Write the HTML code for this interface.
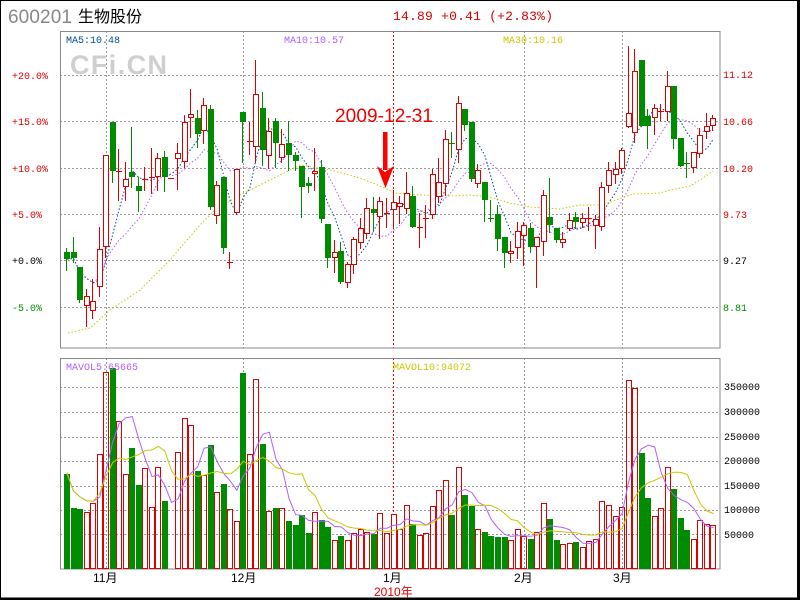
<!DOCTYPE html>
<html><head><meta charset="utf-8">
<style>
html,body{margin:0;padding:0;background:#fff;}
svg{display:block;}
.m{font-family:"Liberation Mono","DejaVu Sans Mono",monospace;}
.s{font-family:"Liberation Sans","Noto Sans CJK SC",sans-serif;}
</style></head>
<body>
<svg id="c" width="800" height="600" xmlns="http://www.w3.org/2000/svg">
<rect x="0" y="0" width="800" height="600" fill="#fff"/>
<rect x="0.5" y="0.5" width="797" height="597.5" fill="none" stroke="#000" stroke-width="1"/>
<line x1="798.5" y1="0" x2="798.5" y2="600" stroke="#000" stroke-width="3"/>
<line x1="0" y1="599" x2="800" y2="599" stroke="#000" stroke-width="2"/>
<text x="8" y="23" class="s" font-size="19" fill="#888" textLength="64">600201</text>
<text x="78" y="22" class="s" font-size="16" fill="#000">生物股份</text>
<text x="393" y="20" class="m" font-size="13" fill="#dd0000" textLength="160">14.89 +0.41 (+2.83%)</text>
<g id="g"></g>
<text x="70" y="74" class="s" font-size="27" font-weight="bold" fill="#cfcfcf" textLength="97">CFi.CN</text>
<text x="66" y="43" class="m" font-size="10" fill="#004c9a">MA5:10.48</text>
<text x="284" y="43" class="m" font-size="10" fill="#b060ff">MA10:10.57</text>
<text x="503" y="43" class="m" font-size="10" fill="#c8c800">MA30:10.16</text>
<text x="66" y="370" class="m" font-size="10" fill="#b060ff">MAVOL5:65665</text>
<text x="393" y="370" class="m" font-size="10" fill="#c8c800">MAVOL10:94072</text>
<text x="335" y="122" class="s" font-size="19" fill="#ee0000" textLength="98">2009-12-31</text>
<rect x="383" y="132" width="4.5" height="38" fill="#ff0000"/>
<polygon points="377,166 385,172 394,166 385.5,188" fill="#ff0000"/>
<g class="m" font-size="10">
<text x="12" y="79" fill="#dd0000">+20.0%</text>
<text x="12" y="125" fill="#dd0000">+15.0%</text>
<text x="12" y="172" fill="#dd0000">+10.0%</text>
<text x="12" y="218" fill="#dd0000">+5.0%</text>
<text x="12" y="264" fill="#000">+0.0%</text>
<text x="12" y="311" fill="#008c00">-5.0%</text>
<text x="723" y="78" fill="#dd0000">11.12</text>
<text x="723" y="125" fill="#dd0000">10.66</text>
<text x="723" y="172" fill="#dd0000">10.20</text>
<text x="723" y="218" fill="#dd0000">9.73</text>
<text x="723" y="264" fill="#000">9.27</text>
<text x="723" y="311" fill="#008c00">8.81</text>
<text x="724" y="390" fill="#000">350000</text>
<text x="724" y="415" fill="#000">300000</text>
<text x="724" y="440" fill="#000">250000</text>
<text x="724" y="464" fill="#000">200000</text>
<text x="724" y="489" fill="#000">150000</text>
<text x="724" y="513" fill="#000">100000</text>
<text x="724" y="538" fill="#000">50000</text>
</g>
<g class="s" font-size="12" fill="#000">
<text x="93" y="582">11月</text>
<text x="231" y="582">12月</text>
<text x="383" y="582">1月</text>
<text x="514" y="582">2月</text>
<text x="613" y="582">3月</text>
<text x="374" y="596" fill="#dd0000">2010年</text>
</g>
</svg>
<script>
var C=[
['g',252,259,248,270],['g',252,258,237,262],['g',267,300,267,302],['r',296,305,289,326],['r',301,310,279,318],
['r',249,286,227,296],['r',155,246,155,257],['g',122,171,122,182],['x',171,171,149,200],['r',179,186,162,200],
['g',172,177,127,187],['g',186,191,177,211],['x',179,179,167,190],['x',177,177,148,193],['r',158,176,153,190],
['g',157,177,151,191],['x',178,178,178,178],['r',153,158,143,189],['r',122,161,115,167],['r',114,117,89,137],
['g',118,134,110,147],['r',105,130,98,143],['g',109,207,105,209],['r',185,215,181,223],['g',177,248,177,253],
['x',262,262,252,268],['r',169,212,169,214],['g',112,122,112,162],['x',141,141,122,154],['r',94,146,60,162],
['g',108,150,92,165],['r',131,155,118,168],['g',121,143,118,167],['r',144,157,129,162],['g',143,155,121,170],
['g',155,161,152,170],['g',166,187,166,217],['g',183,186,177,192],['r',171,173,148,190],['g',167,219,160,222],
['g',224,258,224,267],['r',252,257,240,272],['g',251,282,242,283],['r',264,282,262,287],['r',239,264,237,273],
['r',228,242,218,248],['r',208,233,198,238],['g',209,213,197,230],['r',201,216,197,238],['x',213,213,198,227],
['r',202,209,190,226],['r',203,206,196,223],['r',193,208,172,213],['g',196,227,186,227],['x',227,227,213,247],
['x',218,218,205,237],['r',174,214,169,218],['r',182,196,158,202],['r',139,183,130,195],['g',143,144,132,157],
['r',103,149,96,162],['g',109,125,109,130],['g',122,179,122,181],['r',170,183,164,187],['g',182,200,182,221],
['g',218,219,200,221],['g',214,239,205,250],['g',237,253,237,267],['r',251,253,241,262],['r',231,247,222,258],
['r',225,235,222,265],['g',228,247,223,252],['r',237,246,237,287],['r',195,241,190,255],['g',217,225,178,232],
['g',228,240,228,242],['r',239,242,232,247],['r',220,228,213,230],['g',217,222,212,228],['r',218,222,213,227],
['x',218,218,207,230],['r',219,225,215,248],['r',187,226,182,230],['r',170,185,162,192],['r',169,174,162,183],
['r',150,168,148,173],['r',113,126,46,127],['r',71,132,49,142],['g',60,126,60,126],['g',116,126,109,148],
['r',108,117,104,134],['x',111,111,104,120],['r',86,111,71,120],['g',86,139,86,148],['g',138,166,138,166],
['g',163,164,152,177],['r',152,167,152,172],['r',135,153,128,157],['r',126,131,113,138],['r',118,125,115,130]];
var V=[474,508,509,512,503,454,372,368,421,474,448,485,468,507,467,501,569,452,418,425,471,475,445,492,484,509,521,373,454,379,444,511,508,508,521,525,515,533,512,520,527,540,536,540,533,529,532,534,513,533,514,529,505,524,535,533,506,490,480,515,467,495,506,529,532,536,537,537,540,529,536,539,532,503,519,540,544,543,542,547,541,539,501,505,516,507,380,388,453,498,516,508,467,489,518,530,539,520,524,525];
var R='#dd0000',G='#008c00',s='';
function ln(a,b,c,d,col,da,w){return '<line x1="'+a+'" y1="'+b+'" x2="'+c+'" y2="'+d+'" stroke="'+col+'"'+(da?' stroke-dasharray="'+da+'"':'')+' stroke-width="'+(w||1)+'"/>';}
[75,121,168,214,260,307].forEach(function(y){s+=ln(60,y+.5,720,y+.5,'#999','2,2');});
[387,412,437,461,486,510,534].forEach(function(y){s+=ln(60,y+.5,720,y+.5,'#999','2,2');});
[106,243,524,622].forEach(function(x){s+=ln(x+.5,31,x+.5,348,'#999','2,2');s+=ln(x+.5,358,x+.5,569,'#999','2,2');});
s+=ln(393.5,31,393.5,348,'#ff0000','2,2');s+=ln(393.5,358,393.5,513,'#ff0000','2,2');
s+='<rect x="60.5" y="31.5" width="659.5" height="316.5" fill="none" stroke="#888"/>';
s+='<rect x="60.5" y="358.5" width="659.5" height="210.5" fill="none" stroke="#888"/>';
for(var i=0;i<100;i++){var x=Math.round(64+6.53*i),t=V[i];if(t>=569)continue;var c=C[i][0];
 if(c=='g')s+='<rect x="'+x+'" y="'+t+'" width="6" height="'+(569-t)+'" fill="'+G+'"/>';
 else s+='<rect x="'+(x+.5)+'" y="'+(t+.5)+'" width="5" height="'+(568-t)+'" fill="none" stroke="'+R+'"/>';}
function ma(arr,n){var o=[];for(var i=0;i<arr.length;i++){var a=0,k=0;for(var j=Math.max(0,i-n+1);j<=i;j++){a+=arr[j];k++;}o.push(a/k);}return o;}
var vh=V.map(function(t){return 569-t;});
function poly(vals,f,col,da){var p=vals.map(function(v,i){return (67+6.53*i).toFixed(1)+','+f(v).toFixed(1);}).join(' ');return '<polyline points="'+p+'" fill="none" stroke="'+col+'"'+(da?' stroke-dasharray="'+da+'"':'')+' stroke-width="1"/>';}
var vm10=ma(vh,10);vm10[0]=vm10[0]*0.75+25;
s+=poly(ma(vh,5),function(v){return 569-v;},'#b060ff');
s+=poly(vm10,function(v){return 569-v;},'#c8c800');
var cl=C.map(function(d){return d[0]=='g'?d[2]:d[1];});
s+=poly(ma(cl,10),function(v){return v;},'#b060ff','1.5,2');
s+=poly(ma(cl,5),function(v){return v;},'#004c9a','1.5,2');
s+='<polyline points="68,333 90,328 110,310 140,290 170,260 200,225 215,210 240,195 270,180 300,165 330,170 360,178 385,188 395,193 420,195 450,196 470,195 490,197 510,203 530,207 560,209 580,205 599,205 608,203 633,194 660,193 670,190 690,186 700,180 713,171" fill="none" stroke="#c8c800" stroke-dasharray="1.5,2"/>';
for(var i=0;i<100;i++){var d=C[i],x=Math.round(64+6.53*i),cx=x+2.5;var col=d[0]=='g'?G:R;
 s+=ln(cx,d[3],cx,d[4]+1,col);
 if(d[0]=='g')s+='<rect x="'+x+'" y="'+d[1]+'" width="6" height="'+Math.max(1,d[2]-d[1])+'" fill="'+G+'"/>';
 else if(d[0]=='x')s+=ln(x,d[1]+.5,x+6,d[1]+.5,R);
 else s+='<rect x="'+(x+.5)+'" y="'+(d[1]+.5)+'" width="5" height="'+Math.max(1,d[2]-d[1])+'" fill="#fff" stroke="'+R+'"/>';}
document.getElementById('g').innerHTML=s;
</script>
</body></html>
